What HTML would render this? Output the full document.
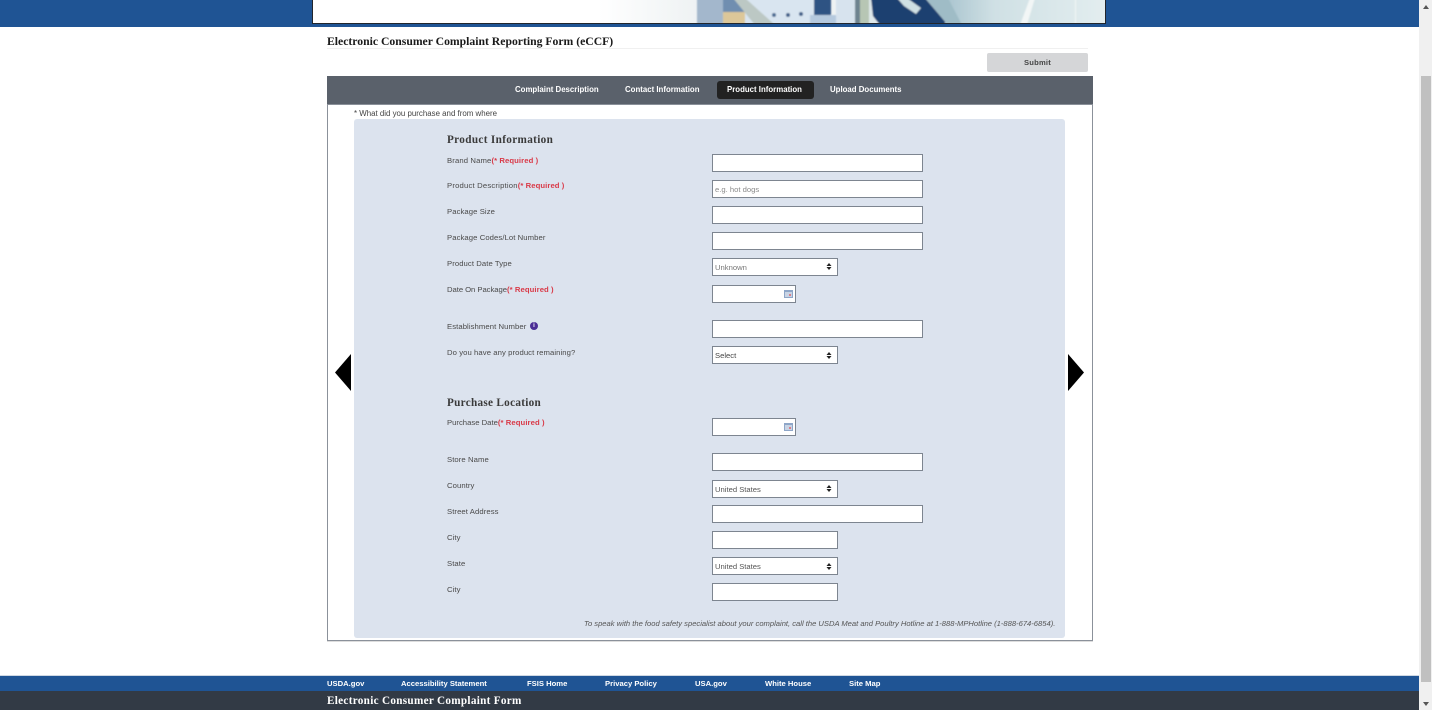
<!DOCTYPE html>
<html lang="en">
<head>
<meta charset="utf-8">
<title>Electronic Consumer Complaint Reporting Form (eCCF)</title>
<style>
html,body{margin:0;padding:0;width:1432px;height:710px;overflow:hidden;background:#fff}
body{position:relative;font-family:"Liberation Sans",sans-serif;color:#444}
div{position:absolute;box-sizing:border-box}
.t{white-space:nowrap;line-height:10px;height:10px}
.l{left:447px;font-size:7.7px;color:#4a4a4a;letter-spacing:.08px}
.r{color:#d93a48;font-weight:bold;letter-spacing:.08px}
.s{font-family:"Liberation Serif",serif;font-weight:bold;white-space:nowrap}
.i{background:#fff;border:1px solid #7d8590;height:18px}
.w{left:712px;width:211px}
.m{left:712px;width:126px}
.d{left:712px;width:84px}
.v{font-size:7.65px;line-height:18px;padding-left:2px;white-space:nowrap}
.n{font-weight:bold;font-size:7.85px;color:#fff;white-space:nowrap;line-height:10px}
.f{font-weight:bold;font-size:7.65px;color:#fff;white-space:nowrap;line-height:10px;top:679px}
svg{position:absolute;display:block}
</style>
</head>
<body>
<div style="left:0;top:0;width:1419px;height:27px;background:#1f5494"></div>
<div style="left:312px;top:0;width:794px;height:24px;border:1px solid #22262b;border-top:0;background:#fff"></div>
<svg style="left:313px;top:0" width="792" height="23" viewBox="313 0 792 23">
<defs>
<linearGradient id="bg" x1="0" x2="1" y1="0" y2="0"><stop offset="0" stop-color="#fff"/><stop offset=".36" stop-color="#fff"/><stop offset=".486" stop-color="#eef2f3"/></linearGradient>
<linearGradient id="tl" x1="0" x2="1" y1="0" y2="0"><stop offset="0" stop-color="#a9c4cf"/><stop offset=".3" stop-color="#cfe0e4"/><stop offset="1" stop-color="#e3edef"/></linearGradient>
<filter id="b"><feGaussianBlur stdDeviation=".8"/></filter>
</defs>
<rect x="313" y="0" width="792" height="23" fill="url(#bg)"/>
<g filter="url(#b)">
<rect x="697" y="-2" width="30" height="27" fill="#a3b7cc"/>
<rect x="723" y="-2" width="25" height="14" fill="#6f8eb0"/>
<rect x="723" y="12" width="24" height="13" fill="#dcc799"/>
<rect x="745" y="-2" width="75" height="27" fill="#d9e5f0"/>
<path d="M733-2h12L775 25H755z" fill="#bcc8c4"/>
<circle cx="774" cy="15" r="2" fill="#4a6a92"/><circle cx="788" cy="15" r="2" fill="#3f5f88"/><circle cx="801" cy="14" r="2" fill="#3f5f88"/>
<rect x="814" y="-2" width="17" height="17" fill="#2f5283"/>
<rect x="810" y="15" width="26" height="10" fill="#b5c9de"/>
<circle cx="840" cy="16" r="2" fill="#4a6a92"/>
<rect x="836" y="-2" width="20" height="27" fill="#d7e3ee"/>
<rect x="855" y="-2" width="5" height="27" fill="#6d838f"/>
<rect x="860" y="-2" width="10" height="27" fill="#b7c6b4"/>
<rect x="869" y="-2" width="84" height="27" fill="#dfe8ea"/>
<path d="M871-2H925L948 25H880L873 16z" fill="#1c3f70"/>
<path d="M897-2h10L921 8l-5 6-12-8z" fill="#cfe0e4"/>
<rect x="945" y="-2" width="162" height="27" fill="url(#tl)"/>
<path d="M948-2H925L948 25H962z" fill="#9fbcc6"/>
<path d="M1020 25L1030-2h5L1027 25z" fill="#f2f6f6"/>
<rect x="1075" y="-2" width="1" height="27" fill="#f2f6f6"/>
</g>
</svg>
<div class="s" style="left:327px;top:36px;font-size:11.7px;line-height:12px;color:#1a1a1a">Electronic Consumer Complaint Reporting Form (eCCF)</div>
<div style="left:327px;top:48px;width:761px;height:1px;background:#f0f0f0"></div>
<div style="left:987px;top:53px;width:101px;height:19px;background:#d5d6d8;border-radius:2px;text-align:center;font-size:7.6px;font-weight:bold;line-height:19px;color:#444;letter-spacing:.2px">Submit</div>

<div style="left:327px;top:76px;width:766px;height:565px;border:1px solid #8b919a;border-top:0;box-shadow:0 1px 0 #ddd"></div>
<div style="left:327px;top:76px;width:766px;height:29px;background:#5a616b;border-bottom:1px solid #8a9099"></div>
<div style="left:717px;top:81px;width:97px;height:18px;background:#222;border-radius:3px"></div>
<div class="n" style="left:515px;top:85px">Complaint Description</div>
<div class="n" style="left:625px;top:85px">Contact Information</div>
<div class="n" style="left:727px;top:85px">Product Information</div>
<div class="n" style="left:830px;top:85px">Upload Documents</div>

<div class="t" style="left:354px;top:109px;font-size:7.9px;color:#444">* What did you purchase and from where</div>
<div style="left:354px;top:119px;width:711px;height:519px;background:#dce3ee;border-radius:3px"></div>

<div class="s" style="left:447px;top:134px;font-size:11.2px;line-height:13px;color:#3a3a3a;letter-spacing:.35px">Product Information</div>
<div class="t l" style="top:156px;letter-spacing:.13px">Brand Name<span class="r">(* Required )</span></div>
<div class="i w" style="top:154px"></div>
<div class="t l" style="top:181px;letter-spacing:.19px">Product Description<span class="r">(* Required )</span></div>
<div class="i w v" style="top:180px;color:#8a8a8a">e.g. hot dogs</div>
<div class="t l" style="top:207px">Package Size</div>
<div class="i w" style="top:206px"></div>
<div class="t l" style="top:233px">Package Codes/Lot Number</div>
<div class="i w" style="top:232px"></div>
<div class="t l" style="top:259px">Product Date Type</div>
<div class="i m v" style="top:258px;color:#777">Unknown</div>
<div class="t l" style="top:285px;letter-spacing:-.05px">Date On Package<span class="r">(* Required )</span></div>
<div class="i d" style="top:285px"></div>
<div class="t l" style="top:322px">Establishment Number</div>
<div style="left:530px;top:322px;width:8px;height:8px;border-radius:50%;background:#4b2e96;color:#fff;font-size:6px;font-weight:bold;line-height:8px;text-align:center">i</div>
<div class="i w" style="top:320px"></div>
<div class="t l" style="top:348px">Do you have any product remaining?</div>
<div class="i m v" style="top:346px;color:#444">Select</div>

<div class="s" style="left:447px;top:397px;font-size:11.2px;line-height:13px;color:#3a3a3a;letter-spacing:.3px">Purchase Location</div>
<div class="t l" style="top:418px;letter-spacing:0">Purchase Date<span class="r">(* Required )</span></div>
<div class="i d" style="top:418px"></div>
<div class="t l" style="top:455px">Store Name</div>
<div class="i w" style="top:453px"></div>
<div class="t l" style="top:481px">Country</div>
<div class="i m v" style="top:480px;color:#555">United States</div>
<div class="t l" style="top:507px">Street Address</div>
<div class="i w" style="top:505px"></div>
<div class="t l" style="top:533px">City</div>
<div class="i m" style="top:531px"></div>
<div class="t l" style="top:559px">State</div>
<div class="i m v" style="top:557px;color:#555">United States</div>
<div class="t l" style="top:585px">City</div>
<div class="i m" style="top:583px"></div>

<svg style="left:826px;top:263px" width="6" height="7" viewBox="0 0 6 7"><path d="M3 0L5.500 3H.5zM3 7L.5 4h5z" fill="#222"/></svg>
<svg style="left:826px;top:352px" width="6" height="7" viewBox="0 0 6 7"><path d="M3 0L5.500 3H.5zM3 7L.5 4h5z" fill="#222"/></svg>
<svg style="left:826px;top:485px" width="6" height="7" viewBox="0 0 6 7"><path d="M3 0L5.500 3H.5zM3 7L.5 4h5z" fill="#222"/></svg>
<svg style="left:826px;top:563px" width="6" height="7" viewBox="0 0 6 7"><path d="M3 0L5.500 3H.5zM3 7L.5 4h5z" fill="#222"/></svg>

<svg style="left:784px;top:290px" width="9" height="8" viewBox="0 0 9 8"><rect width="9" height="8" fill="#8ea6c8"/><rect x="1" y="2" width="7" height="5" fill="#c9d4e4"/><rect x="5" y="4" width="2" height="2" fill="#d9808a"/></svg>
<svg style="left:784px;top:423px" width="9" height="8" viewBox="0 0 9 8"><rect width="9" height="8" fill="#8ea6c8"/><rect x="1" y="2" width="7" height="5" fill="#c9d4e4"/><rect x="5" y="4" width="2" height="2" fill="#d9808a"/></svg>

<svg style="left:334px;top:353px" width="18" height="39" viewBox="0 0 18 39"><path d="M17 1V38L1 19.500z" fill="#000"/></svg>
<svg style="left:1067px;top:353px" width="18" height="39" viewBox="0 0 18 39"><path d="M1 1V38L17 19.500z" fill="#000"/></svg>

<div class="t" style="left:584px;top:619px;font-size:7.6px;font-style:italic;color:#555">To speak with the food safety specialist about your complaint, call the USDA Meat and Poultry Hotline at 1-888-MPHotline (1-888-674-6854).</div>

<div style="left:0;top:676px;width:1419px;height:15px;background:#1f5494;box-shadow:0 -1px 0 #cfd8e3"></div>
<div style="left:0;top:691px;width:1419px;height:19px;background:#323a45"></div>
<div class="f" style="left:327px">USDA.gov</div>
<div class="f" style="left:401px">Accessibility Statement</div>
<div class="f" style="left:527px">FSIS Home</div>
<div class="f" style="left:605px">Privacy Policy</div>
<div class="f" style="left:695px">USA.gov</div>
<div class="f" style="left:765px">White House</div>
<div class="f" style="left:849px">Site Map</div>
<div class="s" style="left:327px;top:695px;font-size:11.2px;line-height:13px;color:#fff;letter-spacing:.3px">Electronic Consumer Complaint Form</div>

<div style="left:1419px;top:0;width:13px;height:710px;background:#f0f0f0"></div>
<div style="left:1421px;top:76px;width:10px;height:606px;background:#c0c0c0"></div>
<svg style="left:1422px;top:4px" width="8" height="6" viewBox="0 0 8 6"><path d="M4 1L7 5H1z" fill="#555"/></svg>
<svg style="left:1422px;top:701px" width="8" height="6" viewBox="0 0 8 6"><path d="M4 5L1 1H7z" fill="#555"/></svg>
</body>
</html>
